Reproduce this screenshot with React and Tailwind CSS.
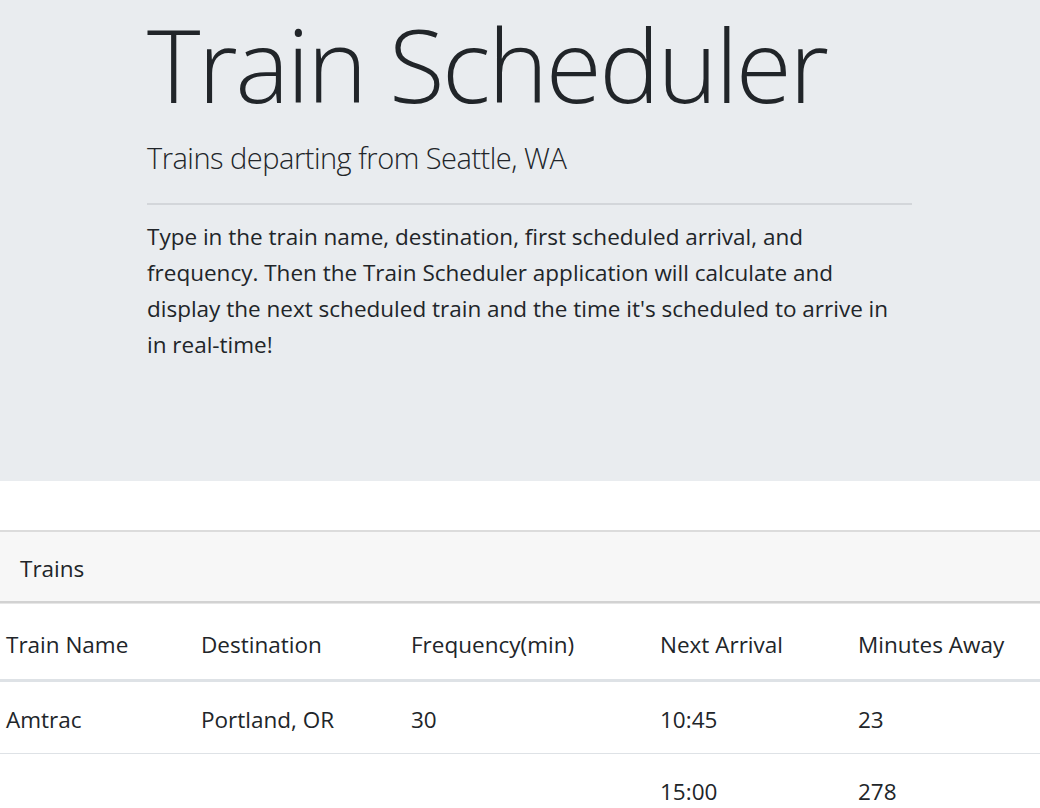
import React from "react";

const trains = [
  { name: "Amtrac", destination: "Portland, OR", frequency: "30", next: "10:45", away: "23" },
  { name: "", destination: "", frequency: "", next: "15:00", away: "278" },
];

const COLS = "grid grid-cols-[195px_210px_249px_198px_1fr] pl-[6px] text-[22.5px] leading-[36px]";

const App = () => {
  return (
    <div className="min-h-screen bg-white text-[#212529] font-['Open_Sans','Noto_Sans',sans-serif]">
      <div className="bg-[#e9ecef] h-[481px]">
        <div className="ml-[147px] w-[765px] pt-[3px]">
          <h1 className="text-[102px] font-light leading-[1.2] tracking-[-2.5px]">Train Scheduler</h1>
          <p className="text-[29px] font-light leading-[1.2] tracking-[-0.5px] mt-[16px]">
            Trains departing from Seattle, WA
          </p>
          <hr className="mt-[27px] border-t-[2px] border-[#d3d6da]" />
          <p className="mt-[14px] text-[22.5px] leading-[36px]">
            Type in the train name, destination, first scheduled arrival, and frequency. Then the Train Scheduler
            application will calculate and display the next scheduled train and the time it's scheduled to arrive in
            in real-time!
          </p>
        </div>
      </div>

      <div className="mt-[49px] border-t-[2px] border-[#dcdcdc]">
        <div className="bg-[#f7f7f7] h-[71px] flex items-center pl-[20px] pt-[5px] text-[22.5px] border-b-[2px] border-[#d2d2d2]">
          Trains
        </div>
        <div className="border-t-[1px] border-[#e6e6e6]">
          <div className={`${COLS} pt-[23px] pb-[16px] border-b-[3px] border-[#dee2e6]`}>
            <div>Train Name</div>
            <div>Destination</div>
            <div>Frequency(min)</div>
            <div>Next Arrival</div>
            <div>Minutes Away</div>
          </div>
          {trains.map((t, i) => (
            <div key={i} className={`${COLS} pt-[20px] pb-[15px] border-b border-[#dee2e6]`}>
              <div>{t.name}</div>
              <div>{t.destination}</div>
              <div>{t.frequency}</div>
              <div>{t.next}</div>
              <div>{t.away}</div>
            </div>
          ))}
        </div>
      </div>
    </div>
  );
};

export default App;
